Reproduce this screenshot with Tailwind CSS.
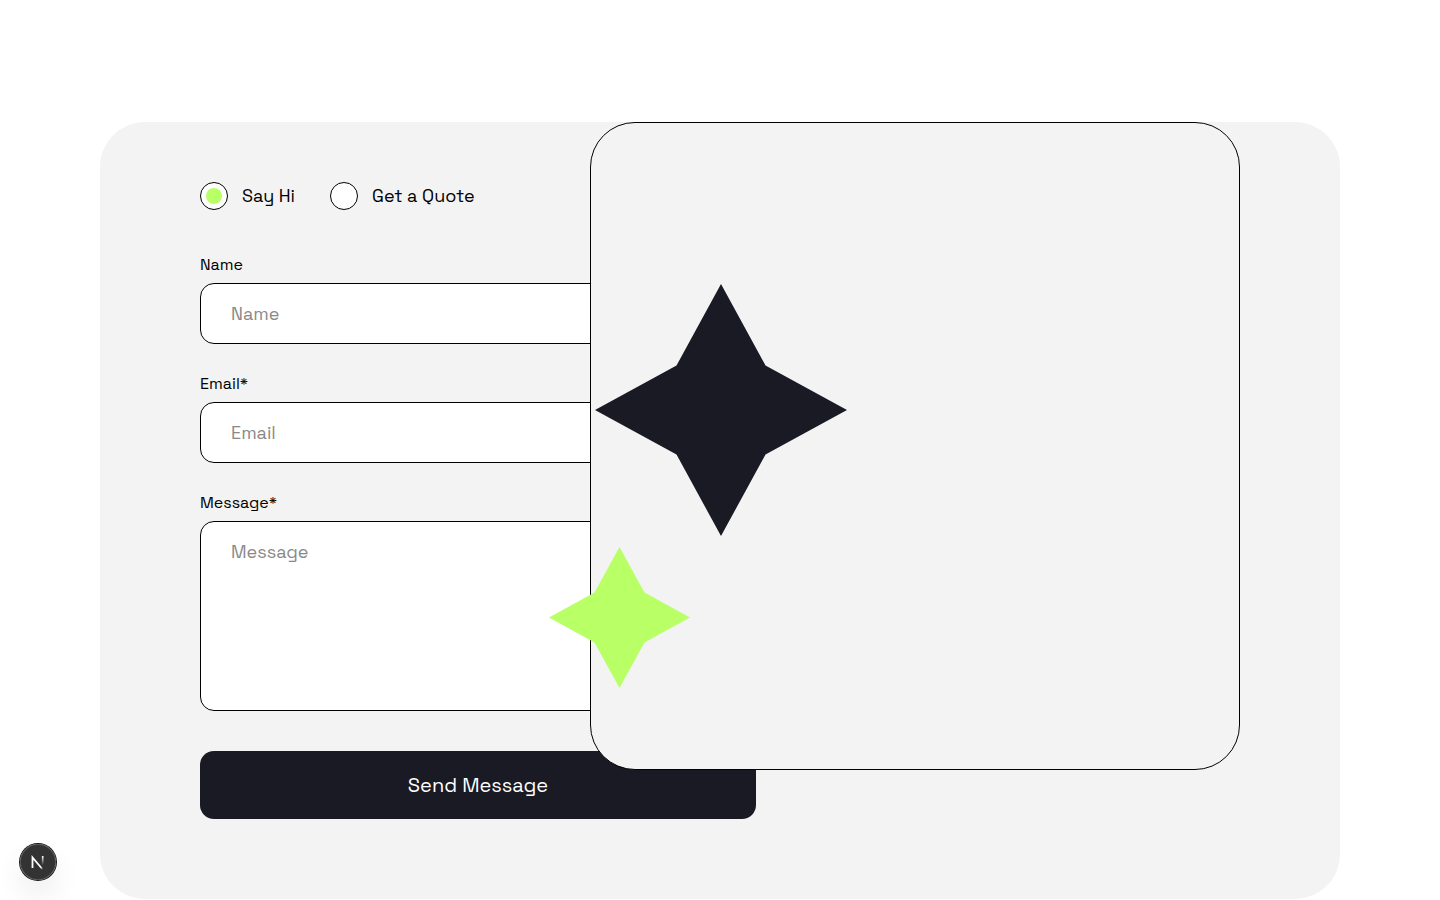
<!DOCTYPE html>
<html lang="en">
<head>
<meta charset="utf-8">
<meta name="viewport" content="width=device-width, initial-scale=1">
<title>Contact</title>
<script src="https://cdn.jsdelivr.net/npm/@tailwindcss/browser@4"></script>
</head>
<body class="bg-white font-['Space_Grotesk',Inter,sans-serif] text-black antialiased">
<main class="px-[100px] pt-[122px]">
  <section class="relative rounded-[45px] bg-[#f3f3f3] px-[100px] pt-[60px] pb-20">
    <form class="w-[556px] max-w-full">
      <fieldset class="mb-[41px] flex gap-[35px]">
        <label class="flex items-center gap-[14px] text-lg leading-7">
          <input type="radio" name="kind" checked class="size-7 appearance-none rounded-full border border-black bg-white p-[5px] before:block before:size-full before:rounded-full checked:before:bg-[#b9ff66]">
          Say Hi
        </label>
        <label class="flex items-center gap-[14px] text-lg leading-7">
          <input type="radio" name="kind" class="size-7 appearance-none rounded-full border border-black bg-white p-[5px] before:block before:size-full before:rounded-full checked:before:bg-[#b9ff66]">
          Get a Quote
        </label>
      </fieldset>
      <label for="name" class="mb-1 block text-base leading-7">Name</label>
      <input id="name" type="text" placeholder="Name" class="mb-[26px] block h-[61px] w-full rounded-[14px] border border-black bg-white px-[30px] text-lg placeholder:text-[#898989]">
      <label for="email" class="mb-1 block text-base leading-7">Email*</label>
      <input id="email" type="email" placeholder="Email" class="mb-[26px] block h-[61px] w-full rounded-[14px] border border-black bg-white px-[30px] text-lg placeholder:text-[#898989]">
      <label for="message" class="mb-1 block text-base leading-7">Message*</label>
      <textarea id="message" placeholder="Message" class="mb-10 block h-[190px] w-full resize-none rounded-[14px] border border-black bg-white px-[30px] py-4 text-lg leading-7 placeholder:text-[#898989]"></textarea>
      <button type="submit" class="block h-[68px] w-full rounded-[14px] bg-[#191a23] text-center text-xl leading-7 text-white">Send Message</button>
    </form>
    <div class="absolute top-0 right-[100px] h-[648px] w-[650px] rounded-[45px] border border-black bg-[#f3f3f3]">
      <svg class="absolute top-[161px] left-1 size-[252px]" viewBox="-126 -126 252 252" aria-hidden="true"><path fill="#191a23" d="M0-126 44.500-44.500 126 0 44.500 44.500 0 126-44.500 44.500-126 0-44.500-44.500Z"/></svg>
      <svg class="absolute top-[424px] -left-[42px] size-[141px]" viewBox="-70.500 -70.500 141 141" aria-hidden="true"><path fill="#b9ff66" d="M0-70.500 25-25 70.500 0 25 25 0 70.500-25 25-70.500 0-25-25Z"/></svg>
    </div>
  </section>
</main>
<button type="button" aria-label="Open developer tools" class="fixed bottom-5 left-5 size-9 rounded-full bg-black/80 shadow-[0_0_0_1px_#171717,inset_0_0_0_1px_rgba(255,255,255,0.14),0_16px_32px_-8px_rgba(0,0,0,0.24)]">
  <svg class="size-9" viewBox="0 0 36 36" fill="none" aria-hidden="true">
    <defs>
      <linearGradient id="fadeDiagonal" gradientUnits="userSpaceOnUse" x1="18" y1="18" x2="24" y2="25"><stop stop-color="#fff"/><stop offset="0.600" stop-color="#fff"/><stop offset="1" stop-color="#fff" stop-opacity="0"/></linearGradient>
      <linearGradient id="fadeStem" gradientUnits="userSpaceOnUse" x1="22" y1="12" x2="22" y2="21"><stop stop-color="#fff"/><stop offset="1" stop-color="#fff" stop-opacity="0"/></linearGradient>
    </defs>
    <path stroke="url(#fadeDiagonal)" stroke-width="1.800" d="M12.500 24V13.500L22.300 25"/>
    <path stroke="url(#fadeStem)" stroke-width="1.700" d="M22.700 12v9"/>
  </svg>
</button>
</body>
</html>
